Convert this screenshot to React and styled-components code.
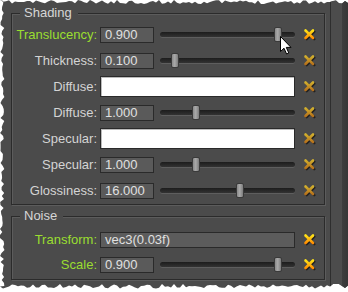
import React from 'react';
import styled, { createGlobalStyle } from 'styled-components';

function makeRand(seed) {
  let s = seed;
  return () => {
    s = (s * 16807) % 2147483647;
    return (s - 1) / 2147483646;
  };
}

const tornPath = (() => {
  const r = makeRand(11);
  const pts = [];
  for (let x = 0; x <= 348; x += 3) pts.push(`${x}px ${(r() * 4).toFixed(1)}px`);
  pts.push(`348px 4px`);
  for (let x = 348; x >= 0; x -= 3) pts.push(`${x}px ${(284 + r() * 4.5).toFixed(1)}px`);
  for (let y = 286; y >= 0; y -= 3) pts.push(`${(r() * 4.5).toFixed(1)}px ${y}px`);
  return pts.join(', ');
})();

const Global = createGlobalStyle`
  html, body { margin: 0; padding: 0; background: #ffffff; }
  body { font-family: "Liberation Sans", Arial, sans-serif; }
`;

const Paper = styled.div`
  width: 348px;
  height: 292px;
  display: flex;
  background: #4b4b4b;
  clip-path: polygon(${tornPath});
  font-family: "Liberation Sans", Arial, sans-serif;
  font-size: 13px;
`;

const Main = styled.div`
  width: 331px;
  box-sizing: border-box;
  padding: 13px 5px 0 11px;
  border-right: 1px solid #2e2e2e;
  display: flex;
  flex-direction: column;
  gap: 11px;
`;

const Strip = styled.div`
  width: 11px;
  background: #4c4c4c;
`;

const Shade = styled.div`
  flex: 1;
  background: linear-gradient(90deg, #3d3d3d, #363636);
`;

const Group = styled.div`
  position: relative;
  border: 1px solid #2b2b2b;
  box-shadow: inset 1px 1px 0 #5c5c5c, 1px 1px 0 #5c5c5c;
  padding: ${(p) => p.$pt}px 0 ${(p) => p.$pb}px 0;
  display: flex;
  flex-direction: column;
  gap: ${(p) => p.$gap}px;
`;

const Legend = styled.span`
  position: absolute;
  left: 8px;
  top: -9px;
  padding: 0 6px 0 4px;
  background: #4b4b4b;
  color: #d6d6d6;
  line-height: 16px;
`;

const Row = styled.div`
  display: grid;
  grid-template-columns: 88px 196px 20px;
  align-items: center;
  height: 21px;
`;

const Label = styled.label`
  text-align: right;
  padding-right: 3px;
  white-space: nowrap;
  color: ${(p) => (p.$accent ? '#9ade30' : '#d4d4d4')};
`;

const Control = styled.div`
  display: flex;
  align-items: center;
`;

const Field = styled.div`
  box-sizing: border-box;
  width: ${(p) => (p.$wide ? '195px' : '54px')};
  height: ${(p) => (p.$tall ? '21px' : '16px')};
  border: 1px solid #2a2a2a;
  background: ${(p) => p.$bg || '#5a5a5a'};
  color: #e0e0e0;
  padding-left: 4px;
  line-height: 14px;
  white-space: nowrap;
  box-shadow: ${(p) => (p.$bg ? 'inset 1px 1px 0 #bbbbbb' : 'none')};
`;

const Slider = styled.div`
  position: relative;
  width: 135px;
  height: 21px;
  margin-left: 6px;
  display: flex;
  align-items: center;
`;

const Track = styled.div`
  width: 100%;
  height: 5px;
  border-radius: 3px;
  background: linear-gradient(#1c1c1c, #333333);
  box-shadow: 0 1px 0 #5e5e5e;
`;

const Thumb = styled.div`
  position: absolute;
  top: 3px;
  width: 8px;
  height: 15px;
  box-sizing: border-box;
  border: 1px solid #3a3a3a;
  border-radius: 2px;
  background: linear-gradient(90deg, #8a8a8a, #a9a9a9 45%, #7c7c7c);
`;

const Cursor = styled.svg`
  position: absolute;
  left: 120px;
  top: 12px;
`;

const ClearCell = styled.div`
  display: flex;
  justify-content: flex-end;
  align-items: center;
`;

const TRACK_USABLE = 127;

function ClearIcon({ active, id }) {
  const c1 = active ? '#ffe619' : '#d2b12e';
  const c2 = active ? '#ff8400' : '#b46c1a';
  const lines = (
    <>
      <line x1="2.5" y1="2.5" x2="10" y2="10" />
      <line x1="10" y1="2.5" x2="2.5" y2="10" />
    </>
  );
  return (
    <svg width="13" height="13" viewBox="0 0 13 13">
      <defs>
        <linearGradient id={id} gradientUnits="userSpaceOnUse" x1="0" y1="2" x2="0" y2="11">
          <stop offset="0" stopColor={c1} />
          <stop offset="1" stopColor={c2} />
        </linearGradient>
      </defs>
      <g stroke="rgba(0,0,0,0.55)" strokeWidth="2.6" strokeLinecap="round" transform="translate(1.2,1.2)">
        {lines}
      </g>
      <g stroke={`url(#${id})`} strokeWidth="2.6" strokeLinecap="round">
        {lines}
      </g>
    </svg>
  );
}

function PropRow({ label, accent, kind, value, pos, active, cursor, id }) {
  let control;
  if (kind === 'color') {
    control = <Field $wide $tall $bg="#ffffff" />;
  } else if (kind === 'text') {
    control = <Field $wide $bg="#5c5c5c" style={{ boxShadow: 'none' }}>{value}</Field>;
  } else {
    control = (
      <Control>
        <Field>{value}</Field>
        <Slider>
          <Track />
          <Thumb style={{ left: `${Math.round(pos * TRACK_USABLE)}px` }} />
          {cursor && (
            <Cursor width="12" height="19" viewBox="0 0 12 19">
              <path d="M0.5 0.5 L0.5 15.5 L4 12.2 L6.6 18 L8.8 17 L6.3 11.4 L11 11.4 Z" fill="#ffffff" stroke="#000000" strokeWidth="1" strokeLinejoin="round" />
            </Cursor>
          )}
        </Slider>
      </Control>
    );
  }
  return (
    <Row>
      <Label $accent={accent}>{label}</Label>
      {control}
      <ClearCell>
        <ClearIcon active={active} id={id} />
      </ClearCell>
    </Row>
  );
}

const shading = [
  { label: 'Translucency:', accent: true, value: '0.900', pos: 0.9, active: true, cursor: true },
  { label: 'Thickness:', value: '0.100', pos: 0.085 },
  { label: 'Diffuse:', kind: 'color' },
  { label: 'Diffuse:', value: '1.000', pos: 0.25 },
  { label: 'Specular:', kind: 'color' },
  { label: 'Specular:', value: '1.000', pos: 0.25 },
  { label: 'Glossiness:', value: '16.000', pos: 0.6 },
];

const noise = [
  { label: 'Transform:', accent: true, kind: 'text', value: 'vec3(0.03f)', active: true },
  { label: 'Scale:', accent: true, value: '0.900', pos: 0.9, active: true },
];

export default function App() {
  return (
    <>
      <Global />
      <Paper>
        <Main>
          <Group $pt={10} $pb={3} $gap={5}>
            <Legend>Shading</Legend>
            {shading.map((r, i) => (
              <PropRow key={i} id={`sx${i}`} {...r} />
            ))}
          </Group>
          <Group $pt={12} $pb={4} $gap={4}>
            <Legend>Noise</Legend>
            {noise.map((r, i) => (
              <PropRow key={i} id={`nx${i}`} {...r} />
            ))}
          </Group>
        </Main>
        <Strip />
        <Shade />
      </Paper>
    </>
  );
}
